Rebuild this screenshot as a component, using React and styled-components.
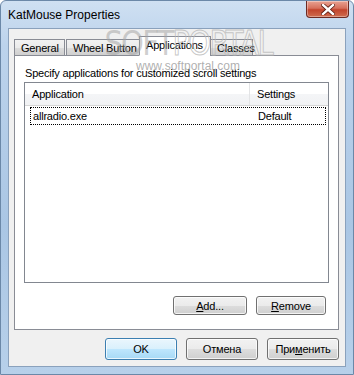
import React from 'react'
import styled, { createGlobalStyle } from 'styled-components'

const GlobalStyle = createGlobalStyle`
	html, body {
		margin: 0;
		padding: 0;
		background: #ffffff;
	}
	body {
		font-family: 'Liberation Sans', Arial, sans-serif;
		font-size: 11px;
		letter-spacing: -0.2px;
		color: #000;
	}
`

const Window = styled.div`
	position: relative;
	width: 354px;
	height: 375px;
	box-sizing: border-box;
	display: flex;
	flex-direction: column;
	border: 1px solid #6b88a8;
	border-radius: 6px 6px 0 0;
	background: linear-gradient(180deg, #cfe0f2 0%, #bcd3ec 12%, #aac6e4 60%, #b7d0ea 100%);
	overflow: hidden;
`

const TitleBar = styled.div`
	height: 27px;
	display: flex;
	align-items: center;
	justify-content: space-between;
	padding-left: 7px;
	font-family: 'Liberation Sans', sans-serif;
	font-size: 12px;
	letter-spacing: 0;
	color: #000;
`

const CloseButton = styled.div`
	align-self: flex-start;
	width: 43px;
	height: 17px;
	margin-right: 4px;
	box-sizing: border-box;
	border: 1px solid #6d2a22;
	border-top: none;
	border-radius: 0 0 4px 4px;
	background: linear-gradient(180deg, #e8a393 0%, #d6705c 45%, #c2442c 55%, #cf6d4f 100%);
	display: flex;
	align-items: center;
	justify-content: center;
	box-shadow: inset 0 0 0 1px rgba(255, 255, 255, 0.35);
`

const Client = styled.div`
	flex: 1;
	margin: 0 7px 7px 7px;
	border: 1px solid #8aa1bc;
	background: #f0f0f0;
	display: flex;
	flex-direction: column;
	padding: 7px 6px 6px 5px;
`

const TabRow = styled.div`
	display: flex;
	align-items: flex-end;
	height: 20px;
	position: relative;
	z-index: 2;
	margin-bottom: -1px;
`

const Tab = styled.div`
	box-sizing: border-box;
	width: ${p => p.$w}px;
	height: ${p => (p.$active ? '20px' : '17px')};
	padding: 1px 0 0 6px;
	margin-right: ${p => (p.$active ? '-1px' : '1px')};
	margin-left: ${p => (p.$active ? '-2px' : '0')};
	border: 1px solid #898c95;
	border-bottom: ${p => (p.$active ? '1px solid #fff' : '1px solid #898c95')};
	background: ${p =>
		p.$active ? '#ffffff' : 'linear-gradient(180deg, #f2f2f2 0%, #ebebeb 50%, #dddddd 51%, #cfcfcf 100%)'};
	display: flex;
	align-items: ${p => (p.$active ? 'flex-start' : 'center')};
	line-height: 14px;
	white-space: nowrap;
`

const Panel = styled.div`
	flex: 1;
	background: #ffffff;
	border: 1px solid #898c95;
	display: flex;
	flex-direction: column;
	padding: 10px 9px 14px 9px;
`

const Hint = styled.div`
	padding-left: 1px;
	line-height: 14px;
	margin-bottom: 2px;
`

const List = styled.div`
	flex: 1;
	border: 1px solid #828790;
	background: #fff;
	display: flex;
	flex-direction: column;
`

const HeaderRow = styled.div`
	display: grid;
	grid-template-columns: 225px 1fr;
	height: 22px;
	background: linear-gradient(180deg, #ffffff 0%, #ffffff 50%, #f4f5f7 51%, #f1f2f4 100%);
	border-bottom: 1px solid #d5d5d5;
`

const HeaderCell = styled.div`
	display: flex;
	align-items: center;
	padding-left: 7px;
	border-right: ${p => (p.$first ? '1px solid #e3e4e6' : 'none')};
`

const Row = styled.div`
	display: grid;
	grid-template-columns: 221px 1fr;
	height: 16px;
	margin: 1px 2px 0 5px;
	border: 1px dotted #000;
	align-items: center;
`

const Cell = styled.div`
	padding-left: ${p => (p.$first ? '2px' : '6px')};
	line-height: 14px;
`

const ButtonRow = styled.div`
	display: flex;
	justify-content: flex-end;
	gap: ${p => p.$gap || 9}px;
	padding-right: ${p => p.$pad || 0}px;
	margin-top: ${p => p.$top || 0}px;
`

const Button = styled.div`
	box-sizing: border-box;
	width: ${p => p.$w || 72}px;
	height: ${p => p.$h || 22}px;
	border: 1px solid ${p => (p.$default ? '#3c7fb1' : '#707070')};
	border-radius: 3px;
	background: ${p =>
		p.$default
			? 'linear-gradient(180deg, #eaf6fd 0%, #d9f0fc 50%, #bee6fd 51%, #a7d9f5 100%)'
			: 'linear-gradient(180deg, #f2f2f2 0%, #ebebeb 50%, #dddddd 51%, #cfcfcf 100%)'};
	box-shadow: inset 0 0 0 1px rgba(255, 255, 255, 0.75);
	display: flex;
	align-items: center;
	justify-content: center;
	color: #000;
	u {
		text-decoration: underline;
	}
`

const Watermark = styled.div`
	position: absolute;
	left: 94px;
	top: 27px;
	width: 186px;
	pointer-events: none;
	z-index: 5;
	display: flex;
	flex-direction: column;
	align-items: center;
`

const MarkBig = styled.div`
	font-family: 'DejaVu Sans', sans-serif;
	font-size: 33px;
	line-height: 31px;
	letter-spacing: -2px;
	color: transparent;
	transform: scaleX(0.88);
	white-space: nowrap;
	-webkit-text-stroke: 1px rgba(185, 185, 185, 0.8);
	span {
		color: rgba(165, 165, 165, 0.55);
		-webkit-text-stroke: 0;
	}
`

const MarkSmall = styled.div`
	font-family: 'Liberation Sans', sans-serif;
	font-size: 12px;
	letter-spacing: 0;
	color: rgba(140, 140, 140, 0.7);
`

const CloseGlyph = () => (
	<svg width="14" height="11" viewBox="0 0 14 11">
		<path d="M2 1 L12 10 M12 1 L2 10" stroke="#5a1a10" strokeWidth="4" strokeLinecap="square" />
		<path d="M2 1 L12 10 M12 1 L2 10" stroke="#ffffff" strokeWidth="2.4" strokeLinecap="square" />
	</svg>
)

const App = () => (
	<>
		<GlobalStyle />
		<Window>
			<TitleBar>
				<span>KatMouse Properties</span>
				<CloseButton>
					<CloseGlyph />
				</CloseButton>
			</TitleBar>
			<Client>
				<TabRow>
					<Tab $w={51}>General</Tab>
					<Tab $w={74}>Wheel Button</Tab>
					<Tab $w={72} $active>Applications</Tab>
					<Tab $w={43}>Classes</Tab>
				</TabRow>
				<Panel>
					<Hint>Specify applications for customized scroll settings</Hint>
					<List>
						<HeaderRow>
							<HeaderCell $first>Application</HeaderCell>
							<HeaderCell>Settings</HeaderCell>
						</HeaderRow>
						<Row>
							<Cell $first>allradio.exe</Cell>
							<Cell>Default</Cell>
						</Row>
					</List>
					<ButtonRow $top={13} $pad={3} $gap={9}>
						<Button $w={74} $h={19}>
							<span><u>A</u>dd...</span>
						</Button>
						<Button $w={70} $h={19}>
							<span><u>R</u>emove</span>
						</Button>
					</ButtonRow>
				</Panel>
				<ButtonRow $top={8} $gap={9}>
					<Button $default>OK</Button>
					<Button>Отмена</Button>
					<Button>При<u>м</u>енить</Button>
				</ButtonRow>
			</Client>
			<Watermark>
				<MarkBig>
					<span>SOFT</span>PORTAL
				</MarkBig>
				<MarkSmall>www.softportal.com</MarkSmall>
			</Watermark>
		</Window>
	</>
)

export default App
